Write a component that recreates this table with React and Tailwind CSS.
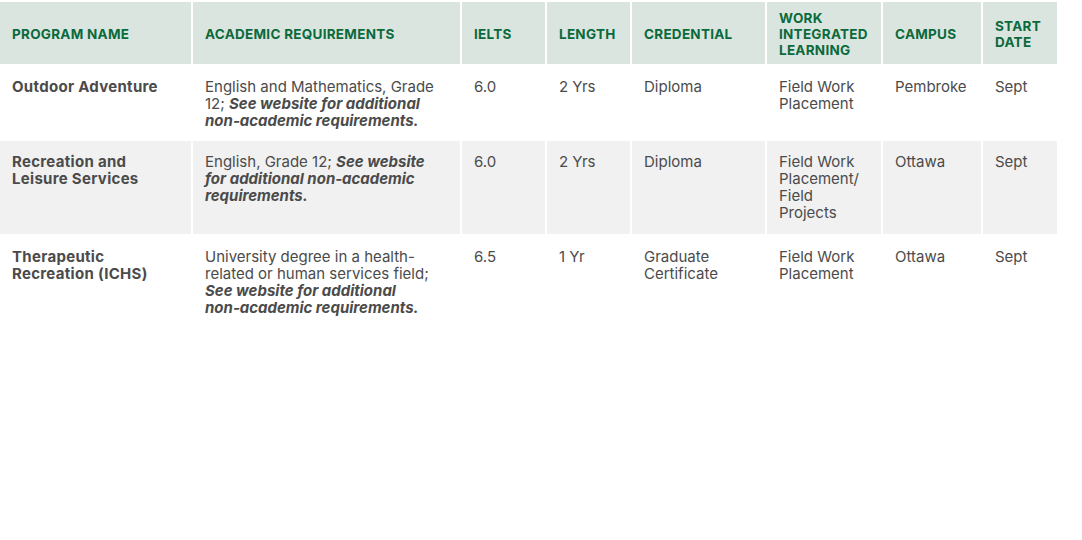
import React from "react";

const cols = "grid grid-cols-[191px_267px_83px_83px_133px_114px_98px_74px] gap-[2px]";

const headers = [
  "PROGRAM NAME",
  "ACADEMIC REQUIREMENTS",
  "IELTS",
  "LENGTH",
  "CREDENTIAL",
  "WORK INTEGRATED LEARNING",
  "CAMPUS",
  "START DATE",
];

const rows = [
  {
    name: "Outdoor Adventure",
    req: "English and Mathematics, Grade 12; ",
    ielts: "6.0",
    length: "2 Yrs",
    credential: "Diploma",
    wil: "Field Work Placement",
    campus: "Pembroke",
    start: "Sept",
    h: "h-[73px]",
    bg: "",
  },
  {
    name: "Recreation and Leisure Services",
    req: "English, Grade 12; ",
    ielts: "6.0",
    length: "2 Yrs",
    credential: "Diploma",
    wil: "Field Work Placement/ Field Projects",
    campus: "Ottawa",
    start: "Sept",
    h: "h-[93px]",
    bg: "bg-[#f1f1f1]",
  },
  {
    name: "Therapeutic Recreation (ICHS)",
    req: "University degree in a health-related or human services field; ",
    ielts: "6.5",
    length: "1 Yr",
    credential: "Graduate Certificate",
    wil: "Field Work Placement",
    campus: "Ottawa",
    start: "Sept",
    h: "",
    bg: "",
  },
];

export default function App() {
  return (
    <div className="min-h-[540px] bg-white pt-[2px] font-['Inter',sans-serif] text-[15px] leading-[17px] text-[#4b4b4b]">
      <div className="flex w-[1057px] flex-col gap-[2px]">
        <div className={cols}>
          {headers.map((h) => (
            <div
              key={h}
              className="flex h-[62px] items-center bg-[#dbe5df] px-3 pt-[2px] text-[13.5px] font-bold leading-[16px] tracking-[0.02em] text-[#0a6a3c]"
            >
              {h}
            </div>
          ))}
        </div>
        {rows.map((r) => (
          <div key={r.name} className={cols}>
            {[
              <span className="font-bold tracking-[0.02em]">{r.name}</span>,
              <span>
                {r.req}
                <b className="italic">See website for additional non‑academic requirements.</b>
              </span>,
              r.ielts,
              r.length,
              r.credential,
              r.wil,
              r.campus,
              r.start,
            ].map((c, j) => (
              <div key={j} className={"px-3 pt-3 pb-3 " + r.h + " " + r.bg}>
                {c}
              </div>
            ))}
          </div>
        ))}
      </div>
    </div>
  );
}
